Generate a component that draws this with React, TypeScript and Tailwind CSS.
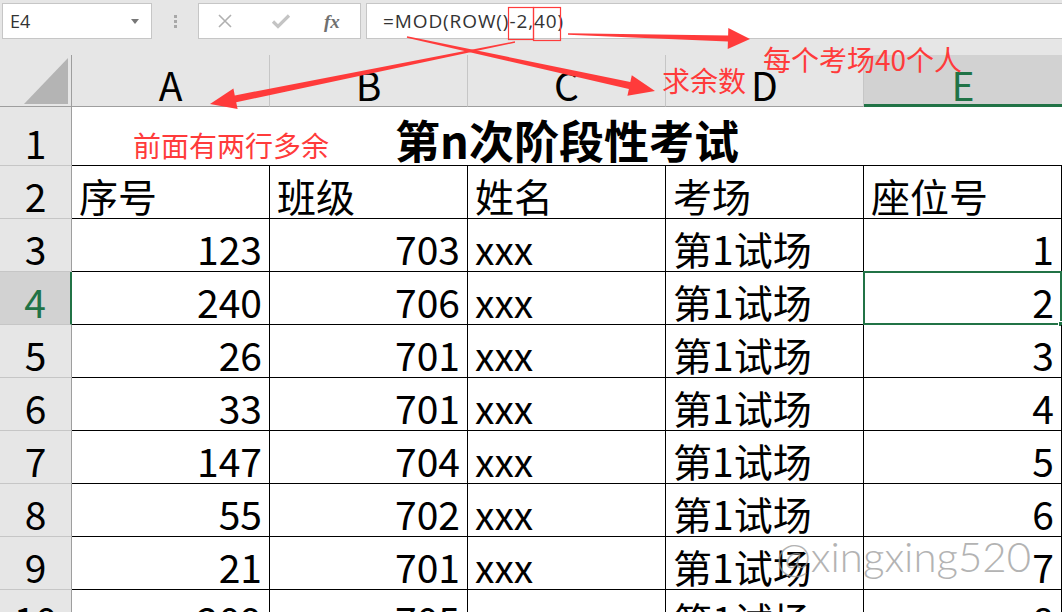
import React from "react";

const cjk = "font-['Noto_Sans_CJK_SC',sans-serif]";

type Row = { n: number; a: string; b: string; c: string; d: string; e: string };

const rows: Row[] = [
  { n: 3, a: "123", b: "703", c: "xxx", d: "第1试场", e: "1" },
  { n: 4, a: "240", b: "706", c: "xxx", d: "第1试场", e: "2" },
  { n: 5, a: "26", b: "701", c: "xxx", d: "第1试场", e: "3" },
  { n: 6, a: "33", b: "701", c: "xxx", d: "第1试场", e: "4" },
  { n: 7, a: "147", b: "704", c: "xxx", d: "第1试场", e: "5" },
  { n: 8, a: "55", b: "702", c: "xxx", d: "第1试场", e: "6" },
  { n: 9, a: "21", b: "701", c: "xxx", d: "第1试场", e: "7" },
  { n: 10, a: "209", b: "705", c: "xxx", d: "第1试场", e: "8" },
];

// tapered arrow polygon (thin tail, fat shaft, triangle head)
function arrow(x1: number, y1: number, x2: number, y2: number, w0: number, w1: number, hl: number, hw: number) {
  const dx = x2 - x1;
  const dy = y2 - y1;
  const len = Math.hypot(dx, dy);
  const ux = dx / len;
  const uy = dy / len;
  const px = -uy;
  const py = ux;
  const bx = x2 - ux * hl;
  const by = y2 - uy * hl;
  const pts = [
    [x1 + (px * w0) / 2, y1 + (py * w0) / 2],
    [bx + (px * w1) / 2, by + (py * w1) / 2],
    [bx + (px * hw) / 2, by + (py * hw) / 2],
    [x2, y2],
    [bx - (px * hw) / 2, by - (py * hw) / 2],
    [bx - (px * w1) / 2, by - (py * w1) / 2],
    [x1 - (px * w0) / 2, y1 - (py * w0) / 2],
  ];
  return pts.map((p) => p.map((v) => v.toFixed(1)).join(",")).join(" ");
}

const Toolbar: React.FC = () => (
  <div className="h-[55px] bg-[#e6e6e6] pt-[3px] flex items-start">
    {/* name box */}
    <div className="ml-[2px] w-[150px] h-[36px] bg-white border border-[#c6c6c6] flex items-center justify-between pl-[7px] pr-[12px]">
      <span className="text-[18px] text-[#333] font-['Open_Sans',sans-serif]">E4</span>
      <svg width="8" height="5" viewBox="0 0 8 5">
        <path d="M0 0h8L4 5z" fill="#777" />
      </svg>
    </div>
    {/* grip dots */}
    <div className="w-[46px] h-[36px] flex flex-col items-center justify-center gap-[2px]">
      <span className="w-[3px] h-[3px] bg-[#a8a8a8]" />
      <span className="w-[3px] h-[3px] bg-[#a8a8a8]" />
      <span className="w-[3px] h-[3px] bg-[#a8a8a8]" />
    </div>
    {/* cancel / enter / fx */}
    <div className="w-[163px] h-[36px] bg-white border border-[#c6c6c6] flex items-center pl-[18px]">
      <svg width="16" height="16" viewBox="0 0 16 16">
        <path d="M2 2L14 14M14 2L2 14" stroke="#b0b0b0" strokeWidth="1.6" />
      </svg>
      <svg className="ml-[38px]" width="20" height="16" viewBox="0 0 20 16">
        <path d="M2 8.5L7 13.5L18 2.5" stroke="#c4c4c4" strokeWidth="3.2" fill="none" />
      </svg>
      <span className="ml-[33px] text-[19px] italic font-bold text-[#707070] font-['Liberation_Serif',serif] leading-none">
        fx
      </span>
    </div>
    {/* formula */}
    <div className="ml-[5px] flex-1 h-[36px] bg-white border border-r-0 border-[#c6c6c6] flex items-center pl-[16px]">
      <span className="text-[19px] text-[#333] font-['Open_Sans',sans-serif] tracking-[0.9px]">=MOD(ROW()-2,40)</span>
    </div>
  </div>
);

const ColHeader: React.FC<{ label: string; active?: boolean }> = ({ label, active }) => (
  <div
    className={
      active
        ? "h-[52px] bg-[#d2d2d2] border-b-[3px] border-[#217346] flex items-end justify-center pb-0 text-[#217346]"
        : "h-[52px] bg-[#e6e6e6] border-r border-b border-r-[#c6c6c6] border-b-[#9e9e9e] flex items-end justify-center pb-[2px] text-black"
    }
  >
    <span className="text-[39px] leading-none">{label}</span>
  </div>
);

const RowHeader: React.FC<{ n: number; active?: boolean; tall?: boolean }> = ({ n, active, tall }) => (
  <div
    className={
      (tall ? "h-[59px] " : "h-[53px] ") +
      (active
        ? "bg-[#d2d2d2] border-r-[2px] border-r-[#217346] text-[#217346] "
        : "bg-[#e6e6e6] border-r border-r-[#9e9e9e] text-black ") +
      "border-b border-b-[#c6c6c6] flex items-end justify-center pb-[3px]"
    }
  >
    <span className="text-[39px] leading-none">{n}</span>
  </div>
);

const Cell: React.FC<{ text: string; right?: boolean; selected?: boolean }> = ({ text, right, selected }) => (
  <div
    className={
      "relative h-[53px] border-r border-b border-black flex items-end px-[7px] pb-[3px] " +
      (right ? "justify-end" : "justify-start")
    }
  >
    <span className="text-[39px] leading-none text-black whitespace-nowrap">{text}</span>
    {selected && (
      <div className="absolute -left-[1px] -top-[1px] -right-[1px] -bottom-[1px] border-[2px] border-[#217346]">
        <span className="absolute -right-[4px] -bottom-[4px] w-[6px] h-[6px] bg-[#217346] border border-white" />
      </div>
    )}
  </div>
);

const App: React.FC = () => {
  return (
    <div className={"relative w-[1062px] h-[612px] overflow-hidden bg-white " + cjk}>
      <Toolbar />

      <div className="grid grid-cols-[72px_repeat(5,198px)]">
        {/* corner */}
        <div className="h-[52px] bg-[#e6e6e6] border-r border-b border-r-[#9e9e9e] border-b-[#9e9e9e] flex items-end justify-end pr-[2px] pb-[2px]">
          <svg width="45" height="46" viewBox="0 0 45 46">
            <path d="M44 0V46H0z" fill="#b4b4b4" />
          </svg>
        </div>
        <ColHeader label="A" />
        <ColHeader label="B" />
        <ColHeader label="C" />
        <ColHeader label="D" />
        <ColHeader label="E" active />

        {/* row 1 title */}
        <RowHeader n={1} tall />
        <div className="col-span-5 h-[59px] border-b border-black flex items-end justify-center pb-[3px]">
          <span className="text-[45px] font-bold leading-none text-black">第n次阶段性考试</span>
        </div>

        {/* row 2 headings */}
        <RowHeader n={2} />
        <Cell text="序号" />
        <Cell text="班级" />
        <Cell text="姓名" />
        <Cell text="考场" />
        <Cell text="座位号" />

        {rows.map((r) => (
          <React.Fragment key={r.n}>
            <RowHeader n={r.n} active={r.n === 4} />
            <Cell text={r.a} right />
            <Cell text={r.b} right />
            <Cell text={r.c} />
            <Cell text={r.d} />
            <Cell text={r.e} right selected={r.n === 4} />
          </React.Fragment>
        ))}
      </div>

      {/* annotations drawn over the sheet */}
      <svg className="absolute left-0 top-0 pointer-events-none" width="1062" height="612" viewBox="0 0 1062 612">
        <rect x="508.5" y="7.5" width="25" height="32" fill="none" stroke="#ff3b3b" strokeWidth="1.2" />
        <rect x="533.5" y="7.5" width="27" height="33" fill="none" stroke="#ff3b3b" strokeWidth="1.2" />
        <polygon points={arrow(515, 42, 210, 104, 1.5, 7, 26, 21)} fill="#ff3b3b" />
        <polygon points={arrow(407, 37, 655, 91, 1.5, 7, 26, 21)} fill="#ff3b3b" />
        <polygon points={arrow(568, 34, 750, 39, 1.5, 6, 22, 21)} fill="#ff3b3b" />
      </svg>

      <span className="absolute left-[133px] top-[131px] text-[28px] leading-none text-[#ff3b3b] whitespace-nowrap">
        前面有两行多余
      </span>
      <span className="absolute left-[662px] top-[66px] text-[28px] leading-none text-[#ff3b3b] whitespace-nowrap">
        求余数
      </span>
      <span className="absolute left-[763px] top-[45px] text-[28px] leading-none text-[#ff3b3b] whitespace-nowrap">
        每个考场40个人
      </span>

      <span className="absolute left-[776px] top-[535px] text-[42px] leading-none font-light text-[#9a9a9a] opacity-75 font-['Lato',sans-serif] whitespace-nowrap">
        @xingxing520
      </span>
    </div>
  );
};

export default App;
